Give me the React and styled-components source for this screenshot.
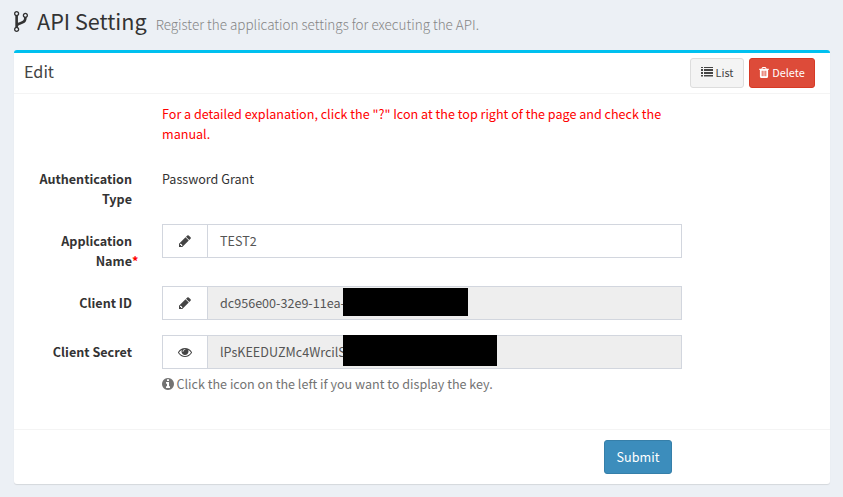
import React from "react";
import styled, { createGlobalStyle } from "styled-components";

const Global = createGlobalStyle`
  * { box-sizing: border-box; }
  body {
    margin: 0;
    background: #ecf0f5;
    color: #333;
    font-family: "Source Sans Pro", "Noto Sans CJK JP", sans-serif;
    font-size: 12.58px;
    line-height: 20px;
  }
`;

const ICONS = {
  fork: {
    box: "384 128 1024 1536",
    d: "M672 1472q0-40-28-68t-68-28-68 28-28 68 28 68 68 28 68-28 28-68zm0-1152q0-40-28-68t-68-28-68 28-28 68 28 68 68 28 68-28 28-68zm640 128q0-40-28-68t-68-28-68 28-28 68 28 68 68 28 68-28 28-68zm96 0q0 52-26 96.5t-70 69.5q-2 287-226 414-67 38-203 81-128 40-169.5 71t-41.5 100v26q44 25 70 69.5t26 96.5q0 80-56 136t-136 56-136-56-56-136q0-52 26-96.5t70-69.5v-820q-44-25-70-69.5t-26-96.5q0-80 56-136t136-56 136 56 56 136q0 52-26 96.5t-70 69.5v497q54-26 154-57 55-17 87.5-29.5t70.5-31 59-39.5 40.5-51 28-69.5 8.5-91.5q-44-25-70-69.5t-26-96.5q0-80 56-136t136-56 136 56 56 136z",
  },
  pencil: {
    box: "128 0 1536 1792",
    d: "M491 1536l91-91-235-235-91 91v107h128v128h107zM960 416l416 416-832 832h-416v-416zm683 96q0 53-37 90l-166 166-416-416 166-165q36-38 90-38 53 0 91 38l235 234q37 39 37 91z",
  },
  eye: {
    box: "0 0 1792 1792",
    d: "M1664 960q-152-236-381-353 61 104 61 225 0 185-131.5 316.5t-316.5 131.5-316.5-131.5-131.5-316.5q0-121 61-225-229 117-381 353 133 205 333.5 326.5t434.5 121.5 434.5-121.5 333.5-326.5zm-720-384q0-20-14-34t-34-14q-125 0-214.5 89.5t-89.5 214.5q0 20 14 34t34 14 34-14 14-34q0-86 61-147t147-61q20 0 34-14t14-34zm848 384q0 34-20 69-140 230-376.5 368.5t-499.5 138.5-499.5-139-376.5-368q-20-35-20-69t20-69q140-229 376.5-368t499.5-139 499.5 139 376.5 368q20 35 20 69z",
  },
  info: {
    box: "128 128 1536 1536",
    d: "M1152 1376v-160q0-14-9-23t-23-9h-96v-512q0-14-9-23t-23-9h-320q-14 0-23 9t-9 23v160q0 14 9 23t23 9h96v320h-96q-14 0-23 9t-9 23v160q0 14 9 23t23 9h448q14 0 23-9t9-23zm-128-896v-160q0-14-9-23t-23-9h-192q-14 0-23 9t-9 23v160q0 14 9 23t23 9h192q14 0 23-9t9-23zm640 416q0 209-103 385.5t-279.5 279.5-385.5 103-385.5-103-279.5-279.5-103-385.5 103-385.5 279.5-279.5 385.5-103 385.5 103 279.5 279.5 103 385.5z",
  },
  list: {
    box: "0 0 12 10",
    d: "M0 0h2v1H0zM3 0h9v1H3zM0 2h2v2H0zM3 2h9v2H3zM0 5h2v2H0zM3 5h9v2H3zM0 8h2v1.6H0zM3 8h9v1.6H3z",
  },
  trash: {
    box: "192 128 1408 1536",
    d: "M704 1376v-704q0-14-9-23t-23-9h-64q-14 0-23 9t-9 23v704q0 14 9 23t23 9h64q14 0 23-9t9-23zm256 0v-704q0-14-9-23t-23-9h-64q-14 0-23 9t-9 23v704q0 14 9 23t23 9h64q14 0 23-9t9-23zm256 0v-704q0-14-9-23t-23-9h-64q-14 0-23 9t-9 23v704q0 14 9 23t23 9h64q14 0 23-9t9-23zm-544-992h448l-48-117q-7-9-17-11h-317q-10 2-17 11zm928 32v64q0 14-9 23t-23 9h-96v948q0 83-47 143.5t-113 60.5h-832q-66 0-113-58.5t-47-141.5v-952h-96q-14 0-23-9t-9-23v-64q0-14 9-23t23-9h309l70-167q15-37 54-63t79-26h320q40 0 79 26t54 63l70 167h309q14 0 23 9t9 23z",
  },
};

const Svg = styled.svg`
  display: block;
  flex: none;
  fill: currentColor;
`;

function Icon({ name, width, height }) {
  const { box, d } = ICONS[name];
  return (
    <Svg viewBox={box} width={width} height={height} aria-hidden="true">
      <path d={d} />
    </Svg>
  );
}

const Page = styled.main`
  height: 497px;
  padding: 0 13px 0 14px;
  overflow: hidden;
`;

const PageHeader = styled.header`
  display: flex;
  height: 50px;
  padding-top: 11px;
`;

const PageTitle = styled.h1`
  margin: -1px 0 0 9px;
  font-size: 21.6px;
  font-weight: 400;
  line-height: 22px;
  white-space: nowrap;
`;

const PageNote = styled.small`
  margin: 3px 0 0 9px;
  color: #858585;
  font-size: 13.48px;
  font-weight: 300;
  line-height: 20px;
  white-space: nowrap;
`;

const Box = styled.section`
  height: 434px;
  border-top: 3px solid #00c0ef;
  border-radius: 3px;
  background: #fff;
  box-shadow: 0 1px 1px rgba(0, 0, 0, 0.1);
`;

const BoxHeader = styled.div`
  display: flex;
  align-items: flex-start;
  gap: 5px;
  height: 41px;
  padding: 5px 15px 0 10px;
  border-bottom: 1px solid #f4f4f4;
`;

const BoxTitle = styled.h3`
  flex: 1;
  margin: 4px 0 0;
  color: #444;
  font-size: 16.2px;
  font-weight: 400;
  line-height: 18px;
`;

const SmallButton = styled.button`
  display: flex;
  align-items: center;
  justify-content: center;
  gap: 3px;
  width: ${(p) => p.$width}px;
  height: 30px;
  padding: 0 0 2px;
  border: 1px solid ${(p) => (p.$danger ? "#d73925" : "#ddd")};
  border-radius: 3px;
  background: ${(p) => (p.$danger ? "#dd4b39" : "#f4f4f4")};
  color: ${(p) => (p.$danger ? "#fff" : "#444")};
  font: 400 10.9px/18px "Source Sans Pro", "Noto Sans CJK JP", sans-serif;
`;

const Form = styled.div`
  height: 336px;
  padding-top: 10px;
  border-bottom: 1px solid #f4f4f4;
`;

const Row = styled.div`
  display: grid;
  grid-template-columns: 118px 520px;
  column-gap: 30px;
  align-items: start;
  margin-bottom: ${(p) => p.$gap}px;
`;

const Label = styled.label`
  padding: ${(p) => (p.$plain ? 0 : 7)}px 0 0 15px;
  text-align: right;
  font-weight: 700;
`;

const Required = styled.span`
  display: inline-block;
  width: 0;
  color: red;
  white-space: nowrap;
`;

const Warning = styled.p`
  grid-column: 2;
  margin: 0;
  color: red;
`;

const InputGroup = styled.div`
  position: relative;
  display: flex;
  height: 34px;
  border: 1px solid #d2d6de;
  background: ${(p) => (p.$readonly ? "#eee" : "#fff")};
`;

const Addon = styled.div`
  display: flex;
  align-items: center;
  justify-content: center;
  width: 45px;
  border-right: 1px solid #d2d6de;
  background: #fff;
  color: #444;
`;

const Value = styled.div`
  padding: 6px 12px;
  color: #555;
  white-space: nowrap;
`;

const Redaction = styled.div`
  position: absolute;
  left: 180px;
  top: ${(p) => p.$top}px;
  width: ${(p) => p.$width}px;
  height: ${(p) => p.$height}px;
  background: #000;
`;

const Help = styled.div`
  display: flex;
  align-items: center;
  gap: 2.5px;
  margin-top: 5px;
  color: #737373;
`;

const BoxFooter = styled.footer`
  display: flex;
  justify-content: flex-end;
  padding: 10px 158px 0 0;
`;

const Submit = styled.button`
  width: 68px;
  height: 34px;
  padding: 0;
  border: 1px solid #367fa9;
  border-radius: 3px;
  background: #3c8dbc;
  color: #fff;
  font: 400 12.6px/20px "Source Sans Pro", "Noto Sans CJK JP", sans-serif;
`;

function Field({ icon, value, readonly, redaction }) {
  return (
    <InputGroup $readonly={readonly}>
      <Addon>
        <Icon name={icon} width={icon === "eye" ? 14 : 12} height={14} />
      </Addon>
      <Value>{value}</Value>
      {redaction && (
        <Redaction $top={redaction.top} $width={redaction.width} $height={redaction.height} />
      )}
    </InputGroup>
  );
}

export default function App() {
  return (
    <Page>
      <Global />
      <PageHeader>
        <Icon name="fork" width={14} height={21} />
        <PageTitle>API Setting</PageTitle>
        <PageNote>Register the application settings for executing the API.</PageNote>
      </PageHeader>
      <Box>
        <BoxHeader>
          <BoxTitle>Edit</BoxTitle>
          <SmallButton $width={54}>
            <Icon name="list" width={12} height={10} />
            List
          </SmallButton>
          <SmallButton $width={66} $danger>
            <Icon name="trash" width={10} height={11} />
            Delete
          </SmallButton>
        </BoxHeader>
        <Form>
          <Row $gap={25}>
            <Warning>
              For a detailed explanation, click the "?" Icon at the top right of the page and check
              the manual.
            </Warning>
          </Row>
          <Row $gap={15}>
            <Label $plain>Authentication Type</Label>
            <div>Password Grant</div>
          </Row>
          <Row $gap={15}>
            <Label>
              Application Name<Required>*</Required>
            </Label>
            <Field icon="pencil" value="TEST2" />
          </Row>
          <Row $gap={15}>
            <Label>Client ID</Label>
            <Field
              icon="pencil"
              value="dc956e00-32e9-11ea-"
              readonly
              redaction={{ top: 1, width: 125, height: 28 }}
            />
          </Row>
          <Row $gap={0}>
            <Label>Client Secret</Label>
            <div>
              <Field
                icon="eye"
                value="lPsKEEDUZMc4WrcilS"
                readonly
                redaction={{ top: -1, width: 154, height: 31 }}
              />
              <Help>
                <Icon name="info" width={12} height={12} />
                Click the icon on the left if you want to display the key.
              </Help>
            </div>
          </Row>
        </Form>
        <BoxFooter>
          <Submit>Submit</Submit>
        </BoxFooter>
      </Box>
    </Page>
  );
}
